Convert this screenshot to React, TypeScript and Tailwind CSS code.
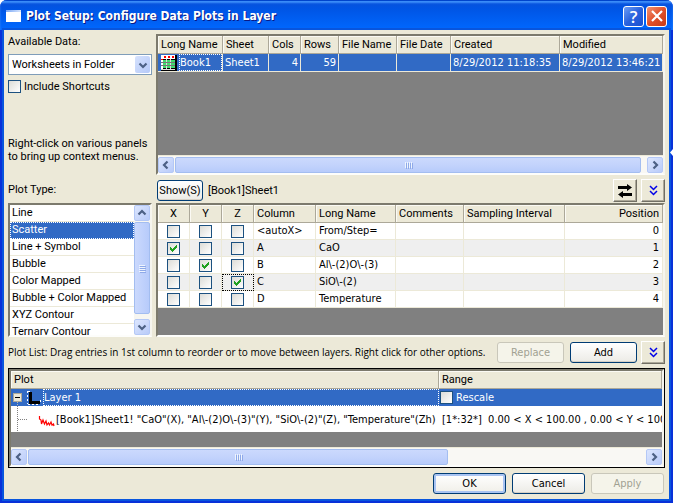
import type { ReactNode } from "react";

type Dir = "left" | "right" | "up" | "down";

const CHEVRONS: Record<Dir, string> = {
  left: "M6.5 1.5 3 5l3.5 3.5",
  right: "M3.5 1.5 7 5l-3.5 3.5",
  up: "M1.5 6.5 5 3l3.5 3.5",
  down: "M1.5 3.5 5 7l3.5-3.5",
};

function Chevron({ dir }: { dir: Dir }) {
  return (
    <svg viewBox="0 0 10 10" className="size-[10px]" fill="none" stroke="#4d6185" strokeWidth="2.2" aria-hidden="true">
      <path d={CHEVRONS[dir]} />
    </svg>
  );
}

function ScrollButton({ dir, label }: { dir: Dir; label: string }) {
  return (
    <button
      type="button"
      aria-label={label}
      className="flex size-4 shrink-0 items-center justify-center rounded-[2px] border border-[#b4c8f6] bg-linear-to-br from-[#dce6fe] to-[#b9cbf9]"
    >
      <Chevron dir={dir} />
    </button>
  );
}

function HScroll({ thumb }: { thumb: string }) {
  return (
    <div className="flex h-[18px] w-full items-center border-t border-[#ece9d8] bg-[#f9f8f4]">
      <ScrollButton dir="left" label="Scroll left" />
      <div className="flex min-w-0 flex-1 px-px">
        <div
          className={`flex h-4 items-center justify-center gap-px rounded-[2px] border border-[#a3bdf0] bg-linear-to-b from-[#cbd9fd] via-[#c3d3fc] to-[#b7cbfb] ${thumb}`}
        >
          {[0, 1, 2, 3].map((i) => (
            <span key={i} className="h-[6px] w-px bg-[#eef4fe] shadow-[1px_1px_0_#8ea9e8]" />
          ))}
        </div>
      </div>
      <ScrollButton dir="right" label="Scroll right" />
    </div>
  );
}

function CheckBox({ id, label, checked = false }: { id: string; label?: string; checked?: boolean }) {
  return (
    <span className="inline-grid size-[13px] shrink-0 align-middle">
      <input
        id={id}
        type="checkbox"
        defaultChecked={checked}
        aria-label={label}
        className="peer col-start-1 row-start-1 size-[13px] appearance-none border border-[#1c5180] bg-linear-to-br from-[#dcdcd7] to-white"
      />
      <svg
        viewBox="0 0 13 13"
        className="pointer-events-none invisible col-start-1 row-start-1 size-[13px] peer-checked:visible"
        fill="#21a121"
        aria-hidden="true"
      >
        <path d="M3 5h1v1h1v1h1V6h1V5h1V4h1V3h1v3H9v1H8v1H7v1H6v1H5V9H4V8H3z" />
      </svg>
    </span>
  );
}

function PushButton({
  children,
  width,
  disabled = false,
  primary = false,
}: {
  children: ReactNode;
  width: string;
  disabled?: boolean;
  primary?: boolean;
}) {
  const tone = disabled
    ? "border-[#c9c7ba] bg-[#f5f4ea] text-[#a1a192]"
    : primary
      ? "border-[#003c74] bg-linear-to-b from-white to-[#f0efe8] shadow-[inset_0_0_0_2px_#a9c4f2]"
      : "border-[#003c74] bg-linear-to-b from-white to-[#ecebe6] shadow-[inset_0_-1px_0_#d6d0c5]";
  return (
    <button
      type="button"
      disabled={disabled}
      className={`h-[21px] shrink-0 rounded-[3px] border text-center leading-[19px] ${width} ${tone}`}
    >
      {children}
    </button>
  );
}

function ToolButton({ label, children }: { label: string; children: ReactNode }) {
  return (
    <button
      type="button"
      aria-label={label}
      className="flex h-[23px] w-6 shrink-0 items-center justify-center border border-t-white border-r-[#716f64] border-b-[#716f64] border-l-white shadow-[inset_-1px_-1px_0_#aca899]"
    >
      {children}
    </button>
  );
}

function DoubleChevron() {
  return (
    <svg viewBox="0 0 9 11" className="h-[11px] w-[9px]" fill="none" stroke="#0000e8" strokeWidth="1.5" aria-hidden="true">
      <path d="M1 1l3.5 3.5L8 1M1 6l3.5 3.5L8 6" />
    </svg>
  );
}

const BEVEL = "border-2 border-t-[#7c7a6d] border-l-[#7c7a6d] border-r-[#f6f5ee] border-b-[#fdfdfb]";
const HEAD =
  "h-[18px] overflow-hidden border-r border-b border-r-[#aca899] border-b-[#aca899] bg-[#ece9d8] px-[3px] font-['Roboto',sans-serif] font-normal leading-4 whitespace-nowrap shadow-[inset_1px_1px_0_#fbfaf4]";

const BOOK_COLUMNS = [
  { name: "Long Name", width: "w-[65px]", value: "Book1" },
  { name: "Sheet", width: "w-[46px]", value: "Sheet1" },
  { name: "Cols", width: "w-[32px]", value: "4", right: true },
  { name: "Rows", width: "w-[38px]", value: "59", right: true },
  { name: "File Name", width: "w-[58px]", value: "" },
  { name: "File Date", width: "w-[54px]", value: "" },
  { name: "Created", width: "w-[109px]", value: "8/29/2012 11:18:35" },
  { name: "Modified", width: "", value: "8/29/2012 13:46:21" },
];

function SheetIcon() {
  return (
    <svg viewBox="0 0 16 16" className="size-4 shrink-0" shapeRendering="crispEdges" aria-hidden="true">
      <path fill="#000" d="M0 0h16v16H0z" />
      <path fill="#fff" d="M0 0h14v4H0zM0 4h2v10H0z" />
      <path fill="#f00" d="M3 1h2v2H3zM7 1h2v2H7zM11 1h2v2h-2zM0 4h2v1H0z" />
      <path fill="#3fdc6f" d="M2 5h3v2H2zM6 5h3v2H6zM10 5h4v2h-4zM2 8h3v2H2zM6 8h3v2H6zM10 8h4v2h-4zM2 11h3v2H2zM6 11h3v2H6zM10 11h4v2h-4z" />
      <path fill="#ddd" d="M5 4h1v10H5zM9 4h1v10H9zM0 14h14v1H0z" />
      <path fill="#777" d="M0 7h14v1H0zM0 10h14v1H0z" />
    </svg>
  );
}

function BookTable() {
  return (
    <div className={`flex h-[141px] flex-col bg-[#808080] ${BEVEL}`}>
      <table className="w-full table-fixed border-separate border-spacing-0">
        <thead>
          <tr>
            {BOOK_COLUMNS.map((c) => (
              <th key={c.name} scope="col" className={`text-left ${HEAD} ${c.width}`}>
                {c.name}
              </th>
            ))}
          </tr>
        </thead>
        <tbody>
          <tr className="bg-[#316ac5] text-white">
            {BOOK_COLUMNS.map((c, i) => (
              <td
                key={c.name}
                className={`h-[18px] overflow-hidden border-r border-b border-[#ece9d8] p-0 leading-[17px] whitespace-nowrap ${c.right ? "text-right" : ""}`}
              >
                {i === 0 ? (
                  <div className="flex items-center gap-[2px] pl-[3px]">
                    <SheetIcon />
                    <span className="h-[17px] flex-1 border border-dotted border-white leading-[15px]">{c.value}</span>
                  </div>
                ) : (
                  <span className="px-[2px]">{c.value}</span>
                )}
              </td>
            ))}
          </tr>
        </tbody>
      </table>
      <div className="mt-auto">
        <HScroll thumb="w-[466px]" />
      </div>
    </div>
  );
}

const COLUMN_HEADS = [
  { name: "X", width: "w-[32px]", align: "text-center" },
  { name: "Y", width: "w-[32px]", align: "text-center" },
  { name: "Z", width: "w-[32px]", align: "text-center" },
  { name: "Column", width: "w-[62px]", align: "text-left" },
  { name: "Long Name", width: "w-[80px]", align: "text-left" },
  { name: "Comments", width: "w-[68px]", align: "text-left" },
  { name: "Sampling Interval", width: "w-[101px]", align: "text-left" },
  { name: "Position", width: "", align: "text-right" },
];

const COLUMN_ROWS = [
  { col: "<autoX>", long: "From/Step=", axis: "" },
  { col: "A", long: "CaO", axis: "X" },
  { col: "B", long: "Al\\-(2)O\\-(3)", axis: "Y" },
  { col: "C", long: "SiO\\-(2)", axis: "Z" },
  { col: "D", long: "Temperature", axis: "" },
];

function ColumnTable() {
  const cell = "h-[17px] overflow-hidden border-r border-b border-[#ece9d8] px-[3px] py-0 leading-4 whitespace-nowrap";
  return (
    <div className={`h-[134px] bg-[#808080] ${BEVEL}`}>
      <table className="w-full table-fixed border-separate border-spacing-0">
        <thead>
          <tr>
            {COLUMN_HEADS.map((c) => (
              <th key={c.name} scope="col" className={`${HEAD} ${c.width} ${c.align}`}>
                {c.name}
              </th>
            ))}
          </tr>
        </thead>
        <tbody>
          {COLUMN_ROWS.map((r, i) => (
            <tr key={r.col} className="bg-white even:bg-[#efefef]">
              {["X", "Y", "Z"].map((a) => (
                <td
                  key={a}
                  className={`h-[17px] border-r border-b border-[#ece9d8] p-0 ${r.axis === "Z" && a === "Z" ? "outline-1 -outline-offset-1 outline-black outline-dotted" : ""}`}
                >
                  <div className="flex h-4 items-center justify-center pr-px">
                    <CheckBox id={`${a}-${i}`} label={`Use ${r.col} as ${a}`} checked={r.axis === a} />
                  </div>
                </td>
              ))}
              <td className={cell}>{r.col}</td>
              <td className={cell}>{r.long}</td>
              <td className={cell} />
              <td className={cell} />
              <td className={`text-right ${cell}`}>{i}</td>
            </tr>
          ))}
        </tbody>
      </table>
    </div>
  );
}

const PLOT_TYPES = [
  "Line",
  "Scatter",
  "Line + Symbol",
  "Bubble",
  "Color Mapped",
  "Bubble + Color Mapped",
  "XYZ Contour",
  "Ternary Contour",
];

function PlotTypeList() {
  return (
    <div className={`flex h-[134px] bg-white ${BEVEL}`}>
      <ul role="listbox" aria-labelledby="plot-type" className="h-full min-w-0 flex-1 overflow-hidden">
        {PLOT_TYPES.map((t) => (
          <li
            key={t}
            role="option"
            aria-selected={t === "Scatter"}
            className="h-[17px] border-b border-[#ece9d8] px-[2px] leading-4 whitespace-nowrap aria-selected:border aria-selected:border-dotted aria-selected:border-white aria-selected:bg-[#316ac5] aria-selected:px-px aria-selected:leading-[14px] aria-selected:text-white"
          >
            {t}
          </li>
        ))}
      </ul>
      <div className="flex w-4 flex-col bg-[#f7f6f1]">
        <ScrollButton dir="up" label="Scroll up" />
        <div className="flex-1 py-px">
          <div className="flex h-[92px] flex-col items-center justify-center gap-px rounded-[2px] border border-[#a3bdf0] bg-linear-to-r from-[#cbd9fd] to-[#b7cbfb]">
            {[0, 1, 2, 3].map((i) => (
              <span key={i} className="h-px w-[6px] bg-[#eef4fe] shadow-[1px_1px_0_#8ea9e8]" />
            ))}
          </div>
        </div>
        <ScrollButton dir="down" label="Scroll down" />
      </div>
    </div>
  );
}

function PlotTable() {
  return (
    <div className="border border-black">
      <div className={`flex h-[98px] flex-col bg-[#808080] ${BEVEL}`}>
        <table className="w-full table-fixed border-separate border-spacing-0">
          <thead>
            <tr>
              <th scope="col" className={`w-[428px] text-left ${HEAD}`}>
                Plot
              </th>
              <th scope="col" className={`text-left ${HEAD}`}>
                Range
              </th>
            </tr>
          </thead>
          <tbody>
            <tr className="bg-[#316ac5] text-white">
              <td className="h-[17px] p-0">
                <div className="flex items-center">
                  <svg viewBox="0 0 32 17" className="h-[17px] w-8 shrink-0" shapeRendering="crispEdges" aria-hidden="true">
                    <path fill="#ece9d8" stroke="#aca899" d="M2.500 4.500h8v8h-8z" />
                    <path stroke="#000" d="M4 8.500h5" />
                    <path stroke="#b8b8b8" strokeDasharray="1 1" d="M6.500 13v4" />
                    <path fill="none" stroke="#fff" strokeDasharray="2 2" d="M16.500 2v13M17 15.500h12M17 2.500h4M29.500 11v4" />
                    <path fill="none" stroke="#000" strokeWidth="3" d="M19.500 3v10H29" />
                  </svg>
                  <span className="h-[17px] flex-1 border border-dotted border-white leading-[15px]">Layer 1</span>
                </div>
              </td>
              <td className="h-[17px] p-0">
                <label htmlFor="rescale" className="flex items-center gap-[3px] pl-px leading-[17px]">
                  <CheckBox id="rescale" />
                  Rescale
                </label>
              </td>
            </tr>
            <tr className="bg-white">
              <td className="h-[26px] overflow-hidden p-0 whitespace-nowrap">
                <div className="flex items-center">
                  <svg viewBox="0 0 45 26" className="h-[26px] w-[45px] shrink-0" fill="none" aria-hidden="true">
                    <path stroke="#808080" strokeDasharray="1 1" d="M6.500 0v26M7 13.500h9" />
                    <path stroke="#f00" strokeWidth="1.2" d="M28.500 10v3l1.500 1 .500 4 1.500-4 1.500 4 1.500-3 1 4 1.500-2 1 2 1.500-3 1 3 1.500-1 .500 2" />
                  </svg>
                  [Book1]Sheet1! "CaO"(X), "Al\-(2)O\-(3)"(Y), "SiO\-(2)"(Z), "Temperature"(Zh)
                </div>
              </td>
              <td className="h-[26px] overflow-hidden py-0 pr-0 pl-[3px] whitespace-pre">
                {"[1*:32*]  0.00 < X < 100.00 , 0.00 < Y < 100"}
              </td>
            </tr>
          </tbody>
        </table>
        <div className="mt-auto">
          <HScroll thumb="w-[420px]" />
        </div>
      </div>
    </div>
  );
}

function TitleBar() {
  return (
    <header className="flex h-[30px] items-center bg-linear-to-b from-[#0a50d8] via-[#0055e5] via-30% to-[#0068ff] pt-[2px] pr-[6px] pl-[6px] shadow-[inset_0_1px_0_#0044cc,inset_0_3px_2px_#3d8ffa]">
      <span className="flex h-[12px] w-[15px] flex-col bg-white">
        <span className="h-[2px] bg-linear-to-r from-[#7aa7f5] to-[#d6e4fb]" />
      </span>
      <h1 className="flex-1 pl-[5px] text-[12px] leading-4 font-bold whitespace-nowrap text-white [text-shadow:1px_1px_0_#0a1883]">
        Plot Setup: Configure Data Plots in Layer
      </h1>
      <div className="flex gap-[2px]">
        <button
          type="button"
          aria-label="Help"
          className="flex size-[21px] items-center justify-center rounded-[3px] border border-white bg-linear-to-br from-[#6c9cf4] via-[#2a62dd] to-[#1b4fd0] font-['Open_Sans',sans-serif] text-[17px] leading-none font-semibold text-white"
        >
          ?
        </button>
        <button
          type="button"
          aria-label="Close"
          className="flex size-[21px] items-center justify-center rounded-[3px] border border-white bg-linear-to-br from-[#f0906f] via-[#e0502a] to-[#c83a14]"
        >
          <svg viewBox="0 0 12 12" className="size-3" stroke="#fff" strokeWidth="2.2" aria-hidden="true">
            <path d="M1 1l10 10M11 1 1 11" />
          </svg>
        </button>
      </div>
    </header>
  );
}

export default function App() {
  return (
    <div className="relative min-h-screen min-w-[640px] bg-white font-['DejaVu_Sans_Condensed','DejaVu_Sans',sans-serif] text-[11px] leading-[13px] text-black">
      <div className="flex min-h-screen flex-col overflow-hidden rounded-t-[7px] bg-[#0831d9]">
        <TitleBar />
        <main className="mx-1 mb-1 flex flex-1 flex-col bg-[#ece9d8] px-1 pt-1 shadow-[0_0_0_2px_#0855dd]">
          <div className="grid grid-cols-[144px_minmax(0,1fr)] gap-x-1">
            <section className="flex flex-col font-['Roboto',sans-serif]">
              <label htmlFor="available" className="block pt-px pb-[6px]">
                Available Data:
              </label>
              <div className="grid">
                <select
                  id="available"
                  className="col-start-1 row-start-1 h-[21px] w-full appearance-none border border-[#7f9db9] bg-white pl-[3px] leading-[19px]"
                >
                  <option>Worksheets in Folder</option>
                </select>
                <span className="pointer-events-none col-start-1 row-start-1 mr-[2px] flex h-[17px] w-[15px] items-center justify-center self-center justify-self-end rounded-[2px] bg-linear-to-br from-[#d6e2fd] to-[#b5c9f8]">
                  <Chevron dir="down" />
                </span>
              </div>
              <label htmlFor="shortcuts" className="mt-[5px] flex items-center gap-[3px]">
                <CheckBox id="shortcuts" />
                Include Shortcuts
              </label>
              <p className="mt-auto pb-3">
                Right-click on various panels
                <br />
                to bring up context menus.
              </p>
            </section>
            <BookTable />

            <h2 id="plot-type" className="self-center pt-px font-['Roboto',sans-serif]">
              Plot Type:
            </h2>
            <div className="flex h-7 items-center pt-1 pb-px pl-px font-['Roboto',sans-serif]">
              <PushButton width="w-[46px]">Show(S)</PushButton>
              <span className="flex-1 pl-[5px]">[Book1]Sheet1</span>
              <div className="flex gap-1">
                <ToolButton label="Swap">
                  <svg viewBox="0 0 16 14" className="h-[14px] w-4" aria-hidden="true">
                    <path d="M1 2h9V0l5 3.500-5 3.500V5H1zM15 9H6V7l-5 3.500 5 3.500v-2h9z" />
                  </svg>
                </ToolButton>
                <ToolButton label="Collapse column panel">
                  <DoubleChevron />
                </ToolButton>
              </div>
            </div>

            <div className="font-['Roboto',sans-serif]">
              <PlotTypeList />
            </div>
            <ColumnTable />
          </div>

          <div className="flex h-[31px] items-center">
            <h2 className="min-w-0 flex-1 font-['Open_Sans',sans-serif] text-[10px] whitespace-nowrap">
              Plot List: Drag entries in 1st column to reorder or to move between layers. Right click for other options.
            </h2>
            <div className="flex items-center gap-[6px]">
              <PushButton width="w-[67px]" disabled>
                Replace
              </PushButton>
              <PushButton width="w-[67px]">Add</PushButton>
            </div>
            <div className="pl-1">
              <ToolButton label="Collapse plot list">
                <DoubleChevron />
              </ToolButton>
            </div>
          </div>

          <PlotTable />

          <footer className="flex justify-end gap-[6px] pt-[5px] pr-px pb-[5px]">
            <PushButton width="w-[73px]" primary>
              OK
            </PushButton>
            <PushButton width="w-[73px]">Cancel</PushButton>
            <PushButton width="w-[73px]" disabled>
              Apply
            </PushButton>
          </footer>
        </main>
      </div>
      <svg viewBox="0 0 3 7" className="absolute top-[149px] right-0 h-[7px] w-[3px]" fill="#fff" aria-hidden="true">
        <path d="M3 0v7L0 3.500z" />
      </svg>
    </div>
  );
}
